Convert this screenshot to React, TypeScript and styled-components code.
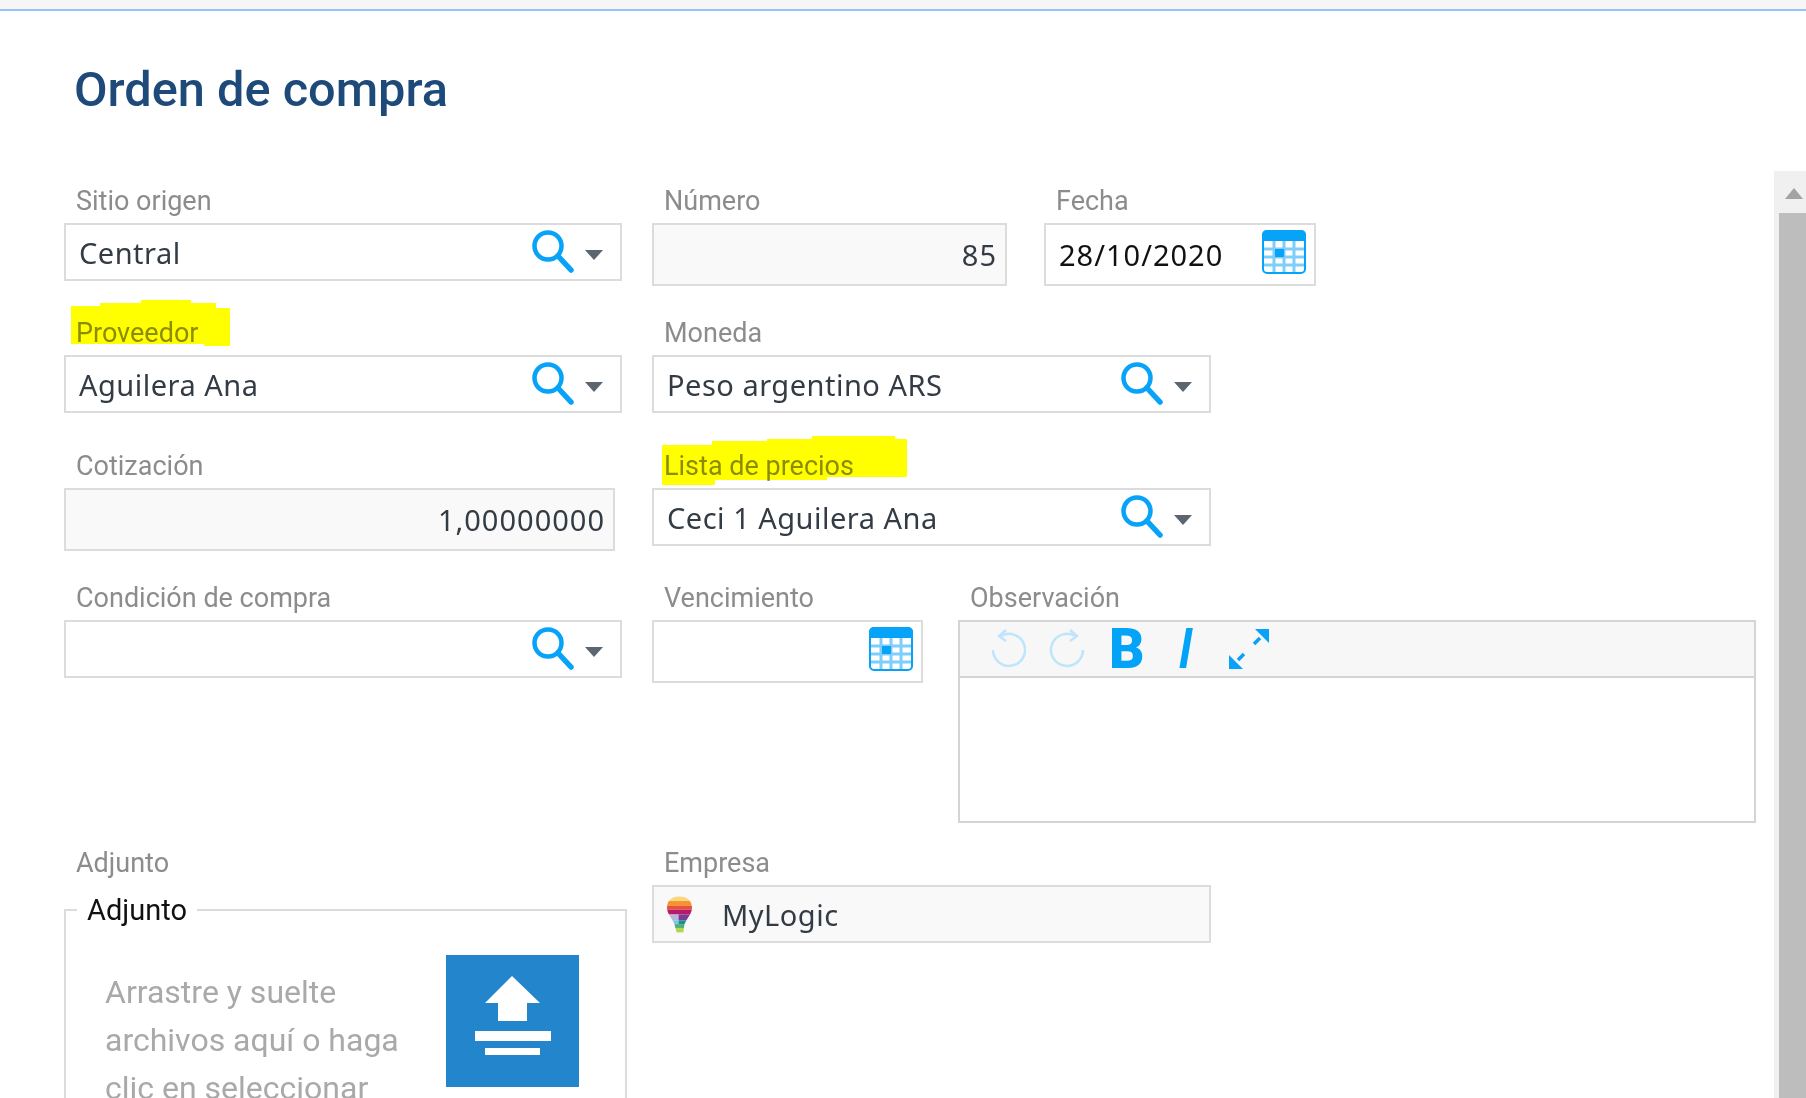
import React from "react";
import styled, { createGlobalStyle } from "styled-components";

const Global = createGlobalStyle`
  html, body { margin: 0; padding: 0; height: 1098px; overflow: hidden; background: #fff; }
  * { box-sizing: border-box; }
`;

const Page = styled.div`
  display: flex;
  height: 1098px;
  overflow: hidden;
  font-family: Roboto, "Liberation Sans", sans-serif;
`;
const Main = styled.div`
  flex: 1;
  min-width: 0;
`;
const TopBand = styled.div`
  height: 11px;
  background: #f6f6f6;
  border-bottom: 2px solid #93c6f7;
  margin-right: -32px;
`;
const TitleBlock = styled.header`
  height: 173px;
  padding: 53px 0 0 74px;
`;
const Title = styled.h1`
  margin: 0;
  font-size: 48.7px;
  line-height: 52px;
  font-weight: 500;
  color: #1e4a7a;
`;
const Form = styled.div`
  padding-left: 64px;
`;
const Row = styled.div<{ $h: number }>`
  display: grid;
  grid-template-columns: 588px 1fr;
  height: ${(p) => p.$h}px;
`;
const RightCell = styled.div<{ $gap?: number }>`
  display: flex;
  gap: ${(p) => p.$gap ?? 0}px;
  align-items: flex-start;
`;
const Field = styled.div<{ $w: number }>`
  width: ${(p) => p.$w}px;
  position: relative;
`;
const Label = styled.div`
  height: 39px;
  line-height: 34px;
  padding-left: 12px;
  font-size: 27px;
  color: #8c8c8c;
  white-space: nowrap;
`;
const Box = styled.div<{ $h?: number; $off?: boolean }>`
  height: ${(p) => p.$h ?? 58}px;
  border: 2px solid #dcdcdc;
  background: ${(p) => (p.$off ? "#f9f9f9" : "#fff")};
  display: flex;
  align-items: center;
  padding: 0 8px 0 13px;
`;
const Value = styled.span<{ $right?: boolean; $dark?: boolean; $digits?: boolean }>`
  flex: 1;
  font-family: "Noto Sans", sans-serif;
  font-size: 29px;
  letter-spacing: ${(p) => (p.$digits ? 1 : 0.5)}px;
  color: ${(p) => (p.$dark ? "#111" : "#333b44")};
  text-align: ${(p) => (p.$right ? "right" : "left")};
  white-space: nowrap;
`;
const Mark = styled.svg`
  position: absolute;
  mix-blend-mode: multiply;
  pointer-events: none;
`;
const SearchSvg = styled.svg`
  width: 44px;
  height: 44px;
  flex: none;
  margin-right: 10px;
`;
const CaretSvg = styled.svg`
  width: 18px;
  height: 10px;
  flex: none;
  margin-right: 9px;
  margin-top: 6px;
`;
const CalendarSvg = styled.svg`
  width: 44px;
  height: 44px;
  flex: none;
  margin-top: -6px;
`;
const Editor = styled.div`
  height: 203px;
  border: 2px solid #d4d4d4;
  display: flex;
  flex-direction: column;
`;
const Toolbar = styled.div`
  height: 56px;
  flex: none;
  background: #f7f7f7;
  border-bottom: 2px solid #d4d4d4;
  display: flex;
  align-items: center;
  padding-left: 31px;
`;
const ToolIcon = styled.svg<{ $w: number; $ml: number }>`
  width: ${(p) => p.$w}px;
  height: 40px;
  margin-left: ${(p) => p.$ml}px;
  flex: none;
`;
const BoldGlyph = styled.span`
  margin-left: 24px;
  width: 33px;
  font-size: 55px;
  line-height: 40px;
  font-weight: 900;
  color: #03a3f7;
`;
const ItalicGlyph = styled.span`
  margin-left: 36px;
  width: 15px;
  font-size: 55px;
  line-height: 40px;
  font-style: italic;
  font-weight: 500;
  color: #03a3f7;
`;
const Fieldset = styled.fieldset`
  width: 563px;
  height: 400px;
  margin: 8px 0 0;
  padding: 0;
  border: 2px solid #dcdcdc;
  min-width: 0;
`;
const Legend = styled.legend`
  margin-left: 11px;
  padding: 0 10px;
  font-size: 29px;
  line-height: 34px;
  color: #111;
`;
const Drop = styled.div`
  display: flex;
  margin-top: 28px;
  padding-left: 39px;
`;
const DropText = styled.div`
  width: 341px;
  padding: 13px 30px 0 0;
  font-size: 32px;
  line-height: 48px;
  color: #a9a9a9;
  flex: none;
`;
const UploadButton = styled.div`
  width: 133px;
  height: 132px;
  background: #2385cc;
  flex: none;
`;
const UploadSvg = styled.svg`
  display: block;
  width: 133px;
  height: 132px;
`;
const LogoSvg = styled.svg`
  width: 25px;
  height: 37px;
  flex: none;
  margin-right: 30px;
`;
const Scrollbar = styled.aside`
  width: 32px;
  flex: none;
  margin-top: 171px;
  background: #f0f0f0;
  display: flex;
  flex-direction: column;
`;
const ScrollArrow = styled.div`
  height: 42px;
  display: flex;
  justify-content: flex-end;
  padding: 17px 3px 0 0;
`;
const Triangle = styled.svg`
  width: 18px;
  height: 11px;
`;
const Thumb = styled.div`
  flex: 1;
  margin-left: 5px;
  background: #bdbdbd;
`;

const Search = () => (
  <SearchSvg viewBox="0 0 44 44">
    <circle cx="17" cy="16" r="13.5" fill="none" stroke="#07a3f8" strokeWidth="4.5" />
    <path d="M27 26 L40 40" stroke="#07a3f8" strokeWidth="5.5" strokeLinecap="round" />
  </SearchSvg>
);
const Caret = () => (
  <CaretSvg viewBox="0 0 18 10">
    <path d="M0 0 H18 L9 10 Z" fill="#5b6670" />
  </CaretSvg>
);
const Calendar = () => (
  <CalendarSvg viewBox="0 0 44 44">
    <rect x="1" y="1" width="42" height="42" rx="4" fill="#fff" stroke="#07a3f8" strokeWidth="2" />
    <path d="M0 5 a5 5 0 0 1 5-5 h34 a5 5 0 0 1 5 5 v6 H0 Z" fill="#07a3f8" />
    <path d="M12 11 V42 M22 11 V42 M32 11 V42 M2 19 H42 M2 27 H42 M2 35 H42" stroke="#7fcdfb" strokeWidth="3" />
    <rect x="13" y="19" width="9" height="8" fill="#07a3f8" />
  </CalendarSvg>
);
const Lookup = ({ value }: { value?: string }) => (
  <Box>
    <Value>{value}</Value>
    <Search />
    <Caret />
  </Box>
);
const Logo = () => (
  <LogoSvg viewBox="0 0 26 38">
    <clipPath id="bulb">
      <path d="M13 0 C22 0 26 6 26 12 C26 19 20 23 18 30 L17 38 H10 L8 30 C6 23 0 19 0 12 C0 6 4 0 13 0 Z" />
    </clipPath>
    <g clipPath="url(#bulb)">
      <rect width="26" height="5" fill="#f9d77e" />
      <rect y="5" width="26" height="5" fill="#f59331" />
      <rect y="10" width="26" height="4" fill="#e8503a" />
      <rect y="14" width="26" height="5" fill="#b51a6b" />
      <rect y="19" width="12" height="6" fill="#b9b6dd" />
      <rect x="12" y="19" width="14" height="6" fill="#7d3a96" />
      <rect y="25" width="12" height="4" fill="#7cc4e8" />
      <rect x="12" y="25" width="14" height="4" fill="#1d8f8a" />
      <rect y="29" width="26" height="4" fill="#4fae7a" />
      <rect y="33" width="26" height="5" fill="#b3d653" />
    </g>
  </LogoSvg>
);

export default function App() {
  return (
    <Page>
      <Global />
      <Main>
        <TopBand />
        <TitleBlock>
          <Title>Orden de compra</Title>
        </TitleBlock>
        <Form>
          <Row $h={132}>
            <Field $w={558}>
              <Label>Sitio origen</Label>
              <Lookup value="Central" />
            </Field>
            <RightCell $gap={37}>
              <Field $w={355}>
                <Label>Número</Label>
                <Box $h={63} $off>
                  <Value $right $digits>85</Value>
                </Box>
              </Field>
              <Field $w={272}>
                <Label>Fecha</Label>
                <Box $h={63}>
                  <Value $dark $digits>28/10/2020</Value>
                  <Calendar />
                </Box>
              </Field>
            </RightCell>
          </Row>
          <Row $h={133}>
            <Field $w={558}>
              <Mark style={{ left: 7, top: -16 }} width="160" height="46" viewBox="0 0 160 46">
                <path d="M0 6 H29 V3 H70 V0 H120 V3 H145 V8 H159 V46 H133 V44 H0 Z" fill="#ffff00" />
              </Mark>
              <Label>Proveedor</Label>
              <Lookup value="Aguilera Ana" />
            </Field>
            <RightCell>
              <Field $w={559}>
                <Label>Moneda</Label>
                <Lookup value="Peso argentino ARS" />
              </Field>
            </RightCell>
          </Row>
          <Row $h={132}>
            <Field $w={551}>
              <Label>Cotización</Label>
              <Box $h={63} $off>
                <Value $right $digits>1,00000000</Value>
              </Box>
            </Field>
            <RightCell>
              <Field $w={559}>
                <Mark style={{ left: 10, top: -13 }} width="245" height="49" viewBox="0 0 245 49">
                  <path d="M0 9 H50 V5 H105 V3 H150 V0 H233 V3 H245 V41 H165 V44 H53 V49 H0 Z" fill="#ffff00" />
                </Mark>
                <Label>Lista de precios</Label>
                <Lookup value="Ceci 1 Aguilera Ana" />
              </Field>
            </RightCell>
          </Row>
          <Row $h={265}>
            <Field $w={558}>
              <Label>Condición de compra</Label>
              <Lookup />
            </Field>
            <RightCell $gap={35}>
              <Field $w={271}>
                <Label>Vencimiento</Label>
                <Box $h={63}>
                  <Value />
                  <Calendar />
                </Box>
              </Field>
              <Field $w={798}>
                <Label>Observación</Label>
                <Editor>
                  <Toolbar>
                    <ToolIcon $w={35} $ml={0} viewBox="0 0 35 40">
                      <path d="M10 7 A16 16 0 1 1 2 21" fill="none" stroke="#bfe5fc" strokeWidth="2.5" />
                      <path d="M15 1 L8 7 L15 12" fill="none" stroke="#bfe5fc" strokeWidth="2.5" />
                    </ToolIcon>
                    <ToolIcon $w={36} $ml={23} viewBox="0 0 36 40">
                      <path d="M26 7 A16 16 0 1 0 34 21" fill="none" stroke="#bfe5fc" strokeWidth="2.5" />
                      <path d="M21 1 L28 7 L21 12" fill="none" stroke="#bfe5fc" strokeWidth="2.5" />
                    </ToolIcon>
                    <BoldGlyph>B</BoldGlyph>
                    <ItalicGlyph>I</ItalicGlyph>
                    <ToolIcon $w={40} $ml={36} viewBox="0 0 40 40">
                      <path d="M40 0 V14 L26 0 Z M0 40 V26 L14 40 Z" fill="#07a3f8" />
                      <path d="M31 9 L25 15 M9 31 L15 25" stroke="#07a3f8" strokeWidth="3.5" />
                    </ToolIcon>
                  </Toolbar>
                </Editor>
              </Field>
            </RightCell>
          </Row>
          <Row $h={260}>
            <div>
              <Label>Adjunto</Label>
              <Fieldset>
                <Legend>Adjunto</Legend>
                <Drop>
                  <DropText>Arrastre y suelte archivos aquí o haga clic en seleccionar</DropText>
                  <UploadButton>
                    <UploadSvg viewBox="0 0 133 132">
                      <path d="M66 21 L94 48 H81 V66 H52 V48 H39 Z M29 76 H105 V86 H29 Z M39 93 H94 V100 H39 Z" fill="#fff" />
                    </UploadSvg>
                  </UploadButton>
                </Drop>
              </Fieldset>
            </div>
            <RightCell>
              <Field $w={559}>
                <Label>Empresa</Label>
                <Box $off>
                  <Logo />
                  <Value>MyLogic</Value>
                </Box>
              </Field>
            </RightCell>
          </Row>
        </Form>
      </Main>
      <Scrollbar>
        <ScrollArrow>
          <Triangle viewBox="0 0 18 11">
            <path d="M9 0 L18 11 H0 Z" fill="#a3a3a3" />
          </Triangle>
        </ScrollArrow>
        <Thumb />
      </Scrollbar>
    </Page>
  );
}
